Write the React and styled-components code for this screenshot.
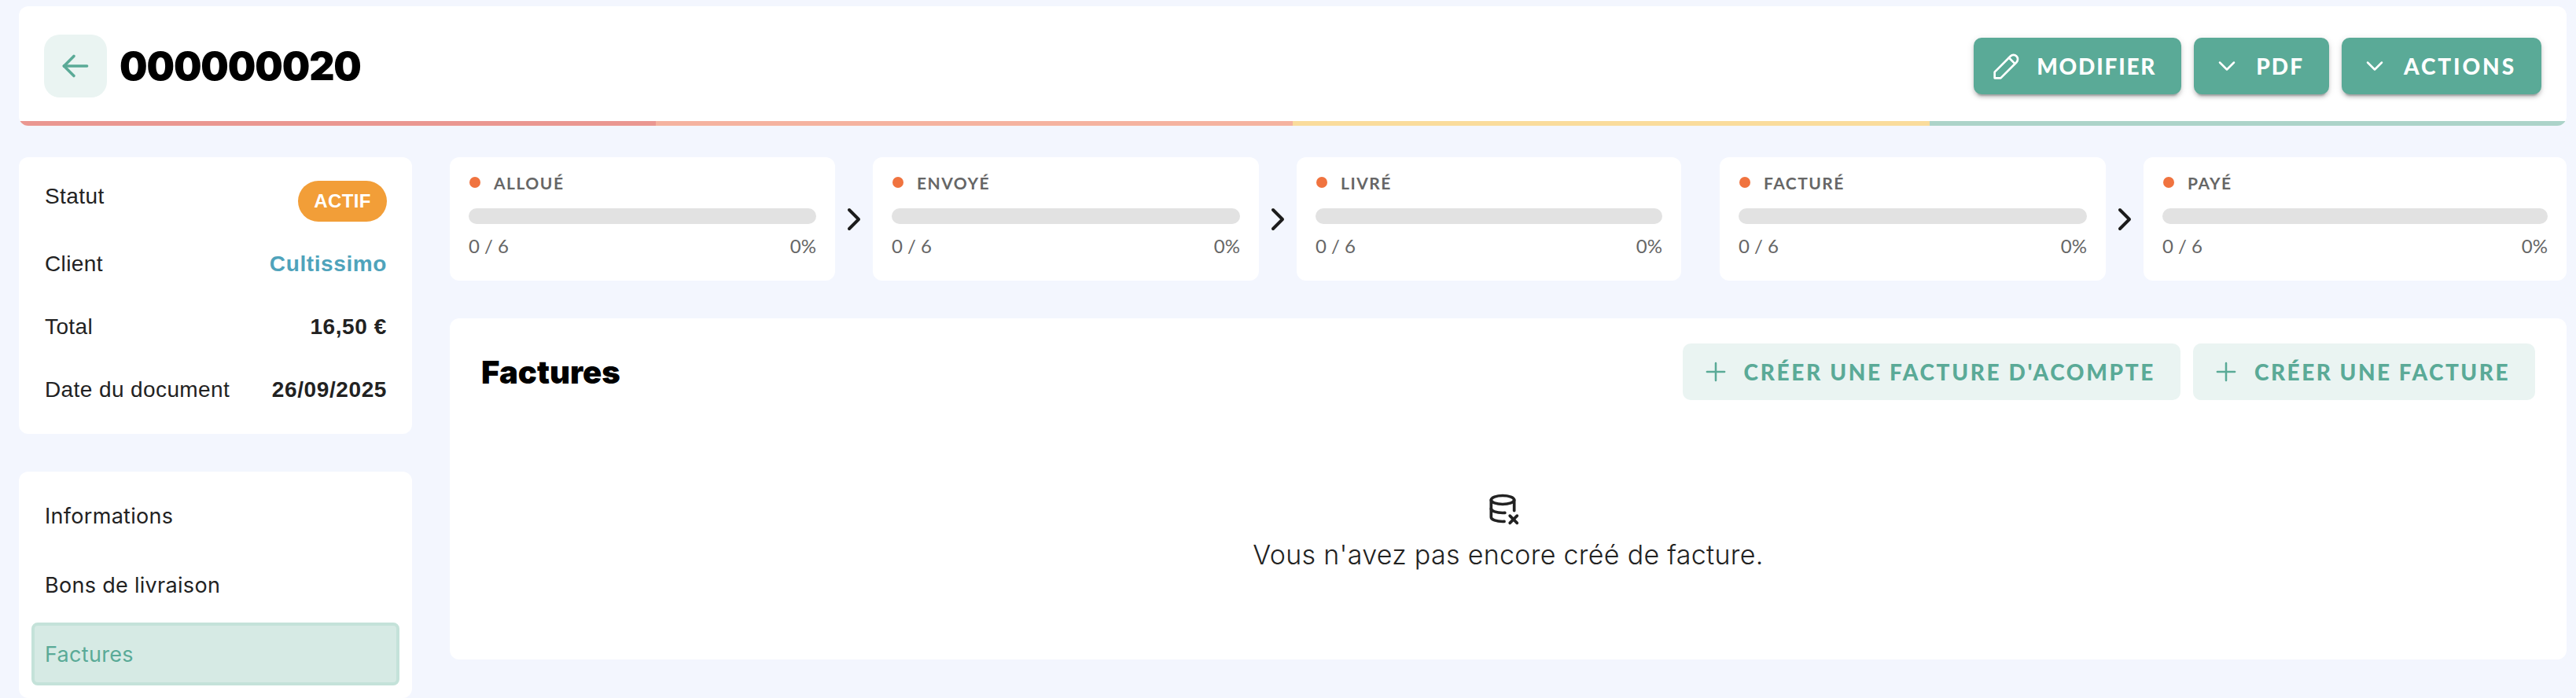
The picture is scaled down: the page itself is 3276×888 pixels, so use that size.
import React from 'react';
import styled, { createGlobalStyle } from 'styled-components';
import {
  TbArrowLeft,
  TbChevronDown,
  TbChevronRight,
  TbDatabaseX,
  TbPencil,
  TbPlus,
} from 'react-icons/tb';

const GlobalStyle = createGlobalStyle`
  html, body {
    margin: 0;
    height: 888px;
    overflow: hidden;
    background-color: #f3f6fe;
    font-family: "Liberation Sans", Arial, sans-serif;
  }
  * {
    box-sizing: border-box;
  }
`;

const Page = styled.div`
  display: flex;
  flex-direction: column;
  gap: 40px;
  height: 888px;
  padding: 8px 12px 0 24px;
  overflow: hidden;
`;

const Header = styled.header`
  background-color: #fff;
  border-radius: 12px;
  overflow: hidden;
  flex-shrink: 0;
`;

const HeaderRow = styled.div`
  display: flex;
  align-items: center;
  justify-content: space-between;
  padding: 36px 32px 30px;
`;

const TitleGroup = styled.div`
  display: flex;
  align-items: center;
  gap: 16px;
`;

const BackButton = styled.button`
  display: flex;
  align-items: center;
  justify-content: center;
  width: 80px;
  height: 80px;
  border: none;
  border-radius: 20px;
  background-color: #eaf4f2;
  color: #5aaa97;
  padding: 0;
`;

const Title = styled.h1`
  margin: 0;
  font-family: Inter, sans-serif;
  font-size: 50px;
  font-weight: 900;
  letter-spacing: -1.1px;
  color: #000;
`;

const Actions = styled.div`
  display: flex;
  gap: 16px;
`;

const ActionButton = styled.button`
  display: flex;
  align-items: center;
  gap: ${(props) => props.$gap || 19}px;
  height: 72px;
  padding: 0 32px 0 ${(props) => props.$left || 24}px;
  border: none;
  border-radius: 10px;
  background-color: #5aaa97;
  color: #fff;
  font-family: Lato, sans-serif;
  font-size: 28px;
  font-weight: 900;
  letter-spacing: ${(props) => props.$spacing || 2}px;
  box-shadow: 0 6px 2px -4px rgba(0, 0, 0, 0.2), 0 4px 4px 0 rgba(0, 0, 0, 0.14),
    0 2px 10px 0 rgba(0, 0, 0, 0.12);
`;

const ProgressStrip = styled.div`
  display: grid;
  grid-template-columns: repeat(4, 1fr);
  height: 6px;
`;

const StripSegment = styled.div`
  background-color: ${(props) => props.$color};
`;

const Body = styled.div`
  display: grid;
  grid-template-columns: 500px 1fr;
  gap: 48px;
  flex: 1;
  min-height: 0;
`;

const Sidebar = styled.aside`
  display: flex;
  flex-direction: column;
  gap: 48px;
`;

const Card = styled.div`
  background-color: #fff;
  border-radius: 12px;
`;

const InfoCard = styled(Card)`
  display: flex;
  flex-direction: column;
  padding: 30px 32px 16px 33px;
  color: #222;
  font-size: 28px;
  letter-spacing: 0.4px;
`;

const InfoRow = styled.div`
  display: flex;
  justify-content: space-between;
  align-items: center;
  height: 80px;
`;

const StatusRow = styled(InfoRow)`
  align-items: flex-start;
  height: 66px;
  line-height: 40px;
`;

const InfoValue = styled.strong`
  font-weight: 700;
  letter-spacing: 0.6px;
  color: ${(props) => props.$color || '#222'};
`;

const Badge = styled.span`
  display: flex;
  align-items: center;
  justify-content: center;
  width: 113px;
  height: 52px;
  border-radius: 26px;
  background-color: #f29e38;
  color: #fff;
  font-size: 24px;
  font-weight: 700;
`;

const NavCard = styled(Card)`
  display: flex;
  flex-direction: column;
  gap: 8px;
  flex: 1;
  padding: 16px;
`;

const NavItem = styled.div`
  display: flex;
  align-items: center;
  height: 80px;
  padding-left: 13px;
  border: 4px solid ${(props) => (props.$active ? '#c4e2d9' : 'transparent')};
  border-radius: 8px;
  background-color: ${(props) => (props.$active ? '#d6eae4' : 'transparent')};
  color: ${(props) => (props.$active ? '#5aaa97' : '#222')};
  font-family: Inter, sans-serif;
  font-size: 27px;
  letter-spacing: 0.3px;
`;

const Main = styled.main`
  display: flex;
  flex-direction: column;
  gap: 48px;
  min-width: 0;
`;

const Steps = styled.div`
  display: grid;
  grid-template-columns: 490px 48px 491px 48px 489px 49px 491px 48px 1fr;
  height: 157px;
`;

const StepCard = styled(Card)`
  padding: 23px 24px 0;
  color: #666;
`;

const StepHead = styled.div`
  display: flex;
  align-items: center;
  gap: 17px;
  height: 18px;
  margin: 0 0 24px 1px;
  font-family: Lato, sans-serif;
  font-size: 21px;
  font-weight: 700;
  letter-spacing: 1.5px;
`;

const Dot = styled.span`
  width: 14px;
  height: 14px;
  border-radius: 50%;
  background-color: #f0733f;
`;

const Track = styled.div`
  height: 20px;
  border-radius: 10px;
  background-color: #e2e2e2;
`;

const StepCounts = styled.div`
  display: flex;
  justify-content: space-between;
  margin-top: 14px;
  font-family: Lato, sans-serif;
  font-size: 24px;
  font-weight: 400;
  line-height: 28px;
`;

const StepArrow = styled.div`
  display: flex;
  align-items: center;
  justify-content: center;
  color: #1c1c1c;
  font-size: 48px;
`;

const InvoicesCard = styled(Card)`
  display: flex;
  flex-direction: column;
  height: 434px;
  padding: 32px 40px;
`;

const InvoicesHead = styled.div`
  display: flex;
  align-items: center;
  justify-content: space-between;
`;

const InvoicesTitle = styled.h2`
  margin: 0;
  font-family: Inter, sans-serif;
  font-size: 40px;
  font-weight: 900;
  color: #000;
`;

const InvoiceButtons = styled.div`
  display: flex;
  gap: 16px;
`;

const SoftButton = styled.button`
  display: flex;
  align-items: center;
  gap: 17px;
  height: 72px;
  padding: 0 32px 0 23px;
  border: none;
  border-radius: 10px;
  background-color: #eaf4f2;
  color: #5aaa97;
  font-family: Lato, sans-serif;
  font-size: 28px;
  font-weight: 900;
  letter-spacing: ${(props) => props.$spacing || 2.5}px;
`;

const Empty = styled.div`
  display: flex;
  flex-direction: column;
  align-items: center;
  gap: 16px;
  margin-top: 116px;
  color: #222;
  font-family: Inter, sans-serif;
  font-size: 34px;
  font-weight: 300;
  letter-spacing: 0.3px;
`;

const EmptyIcon = styled(TbDatabaseX)`
  margin-right: 14px;
`;

const steps = ['ALLOUÉ', 'ENVOYÉ', 'LIVRÉ', 'FACTURÉ', 'PAYÉ'];
const stripColors = ['#ea9791', '#f5b3a0', '#fadc9c', '#acd3c9'];

const Step = ({ label }) => (
  <StepCard>
    <StepHead>
      <Dot />
      {label}
    </StepHead>
    <Track />
    <StepCounts>
      <span>0 / 6</span>
      <span>0%</span>
    </StepCounts>
  </StepCard>
);

const App = () => (
  <Page>
    <GlobalStyle />
    <Header>
      <HeaderRow>
        <TitleGroup>
          <BackButton>
            <TbArrowLeft size={50} strokeWidth={1.7} />
          </BackButton>
          <Title>000000020</Title>
        </TitleGroup>
        <Actions>
          <ActionButton $left={19} $gap={15} $spacing={1.8}>
            <TbPencil size={46} strokeWidth={1.4} />
            MODIFIER
          </ActionButton>
          <ActionButton>
            <TbChevronDown size={36} strokeWidth={1.7} />
            PDF
          </ActionButton>
          <ActionButton $spacing={2.9}>
            <TbChevronDown size={36} strokeWidth={1.7} />
            ACTIONS
          </ActionButton>
        </Actions>
      </HeaderRow>
      <ProgressStrip>
        {stripColors.map((color) => (
          <StripSegment key={color} $color={color} />
        ))}
      </ProgressStrip>
    </Header>
    <Body>
      <Sidebar>
        <InfoCard>
          <StatusRow>
            <span>Statut</span>
            <Badge>ACTIF</Badge>
          </StatusRow>
          <InfoRow>
            <span>Client</span>
            <InfoValue $color="#4fa3bb">Cultissimo</InfoValue>
          </InfoRow>
          <InfoRow>
            <span>Total</span>
            <InfoValue>16,50 €</InfoValue>
          </InfoRow>
          <InfoRow>
            <span>Date du document</span>
            <InfoValue>26/09/2025</InfoValue>
          </InfoRow>
        </InfoCard>
        <NavCard>
          <NavItem>Informations</NavItem>
          <NavItem>Bons de livraison</NavItem>
          <NavItem $active>Factures</NavItem>
        </NavCard>
      </Sidebar>
      <Main>
        <Steps>
          {steps.map((label, index) => (
            <React.Fragment key={label}>
              <Step label={label} />
              {index < steps.length - 1 && (
                <StepArrow>{index !== 2 && <TbChevronRight />}</StepArrow>
              )}
            </React.Fragment>
          ))}
        </Steps>
        <InvoicesCard>
          <InvoicesHead>
            <InvoicesTitle>Factures</InvoicesTitle>
            <InvoiceButtons>
              <SoftButton $spacing={2.65}>
                <TbPlus size={38} strokeWidth={1.6} />
                CRÉER UNE FACTURE D'ACOMPTE
              </SoftButton>
              <SoftButton>
                <TbPlus size={38} strokeWidth={1.6} />
                CRÉER UNE FACTURE
              </SoftButton>
            </InvoiceButtons>
          </InvoicesHead>
          <Empty>
            <EmptyIcon size={44} />
            <span>Vous n'avez pas encore créé de facture.</span>
          </Empty>
        </InvoicesCard>
      </Main>
    </Body>
  </Page>
);

export default App;
